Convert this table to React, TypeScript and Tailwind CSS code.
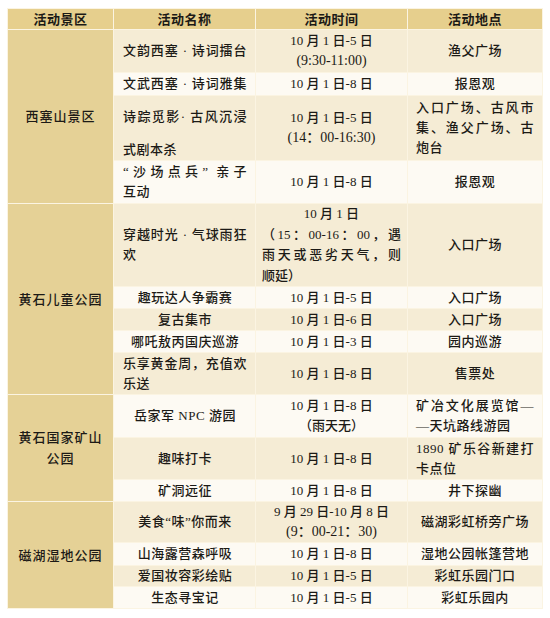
import React from "react";

type LA = "c" | "j" | "l";
type Cell = { lines: string[]; la?: LA[]; just?: boolean; lineCls?: string[] };
type Row = { h: string; bg: "beige" | "white"; name: Cell; time: Cell; place: Cell; tall?: boolean };
type Group = { title: string[]; rows: Row[] };

const FONT = { fontFamily: '"Liberation Serif", "Noto Sans CJK SC", serif' };

function alignOf(cell: Cell, i: number): LA {
  if (cell.la && cell.la[i]) return cell.la[i];
  if (!cell.just) return "c";
  const last = i === cell.lines.length - 1;
  return last && cell.lines.length > 1 ? "l" : "j";
}

function Lines({ cell, leading }: { cell: Cell; leading: string }) {
  return (
    <div className={leading}>
      {cell.lines.map((l, i) => {
        const a = alignOf(cell, i);
        const cls =
          a === "j"
            ? "text-justify [text-align-last:justify]"
            : a === "l"
            ? "text-left"
            : "text-center";
        return (
          <div key={i} className={`${cls} whitespace-nowrap ${cell.lineCls?.[i] ?? ""}`}>
            {l}
          </div>
        );
      })}
    </div>
  );
}

const groups: Group[] = [
  {
    title: ["西塞山景区"],
    rows: [
      {
        h: "h-[43px]",
        bg: "beige",
        name: { lines: ["文韵西塞 · 诗词擂台"], just: true },
        time: { lines: ["10 月 1 日-5 日", "(9:30-11:00)"], lineCls: ["", "text-[14px]"] },
        place: { lines: ["渔父广场"] },
      },
      {
        h: "h-[23px]",
        bg: "white",
        name: { lines: ["文武西塞 · 诗词雅集"], just: true },
        time: { lines: ["10 月 1 日-8 日"] },
        place: { lines: ["报恩观"] },
      },
      {
        h: "h-[65px]",
        bg: "beige",
        tall: true,
        name: { lines: ["诗踪觅影· 古风沉浸", "式剧本杀"], just: true, lineCls: ["", "mt-[13px]"] },
        time: { lines: ["10 月 1 日-5 日", "(14：00-16:30)"], lineCls: ["", "text-[14px]"] },
        place: { lines: ["入口广场、古风市", "集、渔父广场、古", "炮台"], just: true },
      },
      {
        h: "h-[43px]",
        bg: "white",
        name: { lines: ["“沙场点兵” 亲子", "互动"], just: true },
        time: { lines: ["10 月 1 日-8 日"] },
        place: { lines: ["报恩观"] },
      },
    ],
  },
  {
    title: ["黄石儿童公园"],
    rows: [
      {
        h: "h-[83px]",
        bg: "beige",
        name: { lines: ["穿越时光 · 气球雨狂", "欢"], just: true },
        time: {
          lines: ["10 月 1 日", "（15：00-16：00，遇", "雨天或恶劣天气，则", "顺延）"],
          la: ["c", "j", "j", "l"],
        },
        place: { lines: ["入口广场"] },
      },
      {
        h: "h-[22px]",
        bg: "white",
        name: { lines: ["趣玩达人争霸赛"] },
        time: { lines: ["10 月 1 日-5 日"] },
        place: { lines: ["入口广场"] },
      },
      {
        h: "h-[22px]",
        bg: "beige",
        name: { lines: ["复古集市"] },
        time: { lines: ["10 月 1 日-6 日"] },
        place: { lines: ["入口广场"] },
      },
      {
        h: "h-[22px]",
        bg: "white",
        name: { lines: ["哪吒敖丙国庆巡游"] },
        time: { lines: ["10 月 1 日-3 日"] },
        place: { lines: ["园内巡游"] },
      },
      {
        h: "h-[42px]",
        bg: "beige",
        name: { lines: ["乐享黄金周，充值欢", "乐送"], just: true },
        time: { lines: ["10 月 1 日-8 日"] },
        place: { lines: ["售票处"] },
      },
    ],
  },
  {
    title: ["黄石国家矿山", "公园"],
    rows: [
      {
        h: "h-[43px]",
        bg: "white",
        name: { lines: ["岳家军 NPC 游园"] },
        time: { lines: ["10 月 1 日-8 日", "（雨天无）"] },
        place: { lines: ["矿冶文化展览馆—", "—天坑路线游园"], la: ["j", "l"] },
      },
      {
        h: "h-[42px]",
        bg: "beige",
        name: { lines: ["趣味打卡"] },
        time: { lines: ["10 月 1 日-8 日"] },
        place: { lines: ["1890 矿乐谷新建打", "卡点位"], just: true },
      },
      {
        h: "h-[22px]",
        bg: "white",
        name: { lines: ["矿洞远征"] },
        time: { lines: ["10 月 1 日-8 日"] },
        place: { lines: ["井下探幽"] },
      },
    ],
  },
  {
    title: ["磁湖湿地公园"],
    rows: [
      {
        h: "h-[41px]",
        bg: "beige",
        name: { lines: ["美食“味”你而来"] },
        time: { lines: ["9 月 29 日-10 月 8 日", "(9：00-21：30)"], lineCls: ["", "text-[14px]"] },
        place: { lines: ["磁湖彩虹桥旁广场"] },
      },
      {
        h: "h-[23px]",
        bg: "white",
        name: { lines: ["山海露营森呼吸"] },
        time: { lines: ["10 月 1 日-8 日"] },
        place: { lines: ["湿地公园帐篷营地"] },
      },
      {
        h: "h-[21px]",
        bg: "beige",
        name: { lines: ["爱国妆容彩绘贴"] },
        time: { lines: ["10 月 1 日-5 日"] },
        place: { lines: ["彩虹乐园门口"] },
      },
      {
        h: "h-[22px]",
        bg: "white",
        name: { lines: ["生态寻宝记"] },
        time: { lines: ["10 月 1 日-5 日"] },
        place: { lines: ["彩虹乐园内"] },
      },
    ],
  },
];

export default function App() {
  const bgCls = (b: "beige" | "white") => (b === "beige" ? "bg-[#f5ecd5]" : "bg-[#fdfaf3]");
  return (
    <div className="w-[550px] h-[618px] bg-white pt-[8px] pl-[7px]" style={FONT}>
      <table className="table-fixed border-collapse text-[13px] text-[#1c1a16] font-medium">
        <colgroup>
          <col className="w-[106px]" />
          <col className="w-[142px]" />
          <col className="w-[152px]" />
          <col className="w-[135px]" />
        </colgroup>
        <thead>
          <tr className="h-[21px] bg-[#e6cf8d] font-bold">
            {["活动景区", "活动名称", "活动时间", "活动地点"].map((t) => (
              <th key={t} className="p-0 border border-[#fbf4e2] text-center leading-[19px] tracking-[0.5px]">
                {t}
              </th>
            ))}
          </tr>
        </thead>
        <tbody>
          {groups.map((g) =>
            g.rows.map((r, i) => (
              <tr key={g.title[0] + i} className={`${r.h} ${bgCls(r.bg)}`}>
                {i === 0 && (
                  <td
                    rowSpan={g.rows.length}
                    className="p-0 px-[4px] border border-[#fbf4e2] bg-[#e5d196] text-center align-middle leading-[21px] tracking-[1px]"
                  >
                    {g.title.map((t) => (
                      <div key={t}>{t}</div>
                    ))}
                  </td>
                )}
                <td
                  className={`p-0 pl-[9px] pr-[8px] border border-[#fbf4e2] tracking-[0.5px] ${
                    r.tall ? "align-top pt-[11px]" : "align-middle"
                  }`}
                >
                  <Lines cell={r.name} leading="leading-[20px]" />
                </td>
                <td className="p-0 px-[6px] border border-[#fbf4e2] align-middle">
                  <Lines cell={r.time} leading={r.h === "h-[83px]" ? "leading-[20.5px]" : "leading-[20px]"} />
                </td>
                <td className="p-0 px-[8px] border border-[#fbf4e2] align-middle tracking-[0.5px]">
                  <Lines cell={r.place} leading="leading-[20px]" />
                </td>
              </tr>
            ))
          )}
        </tbody>
      </table>
    </div>
  );
}
